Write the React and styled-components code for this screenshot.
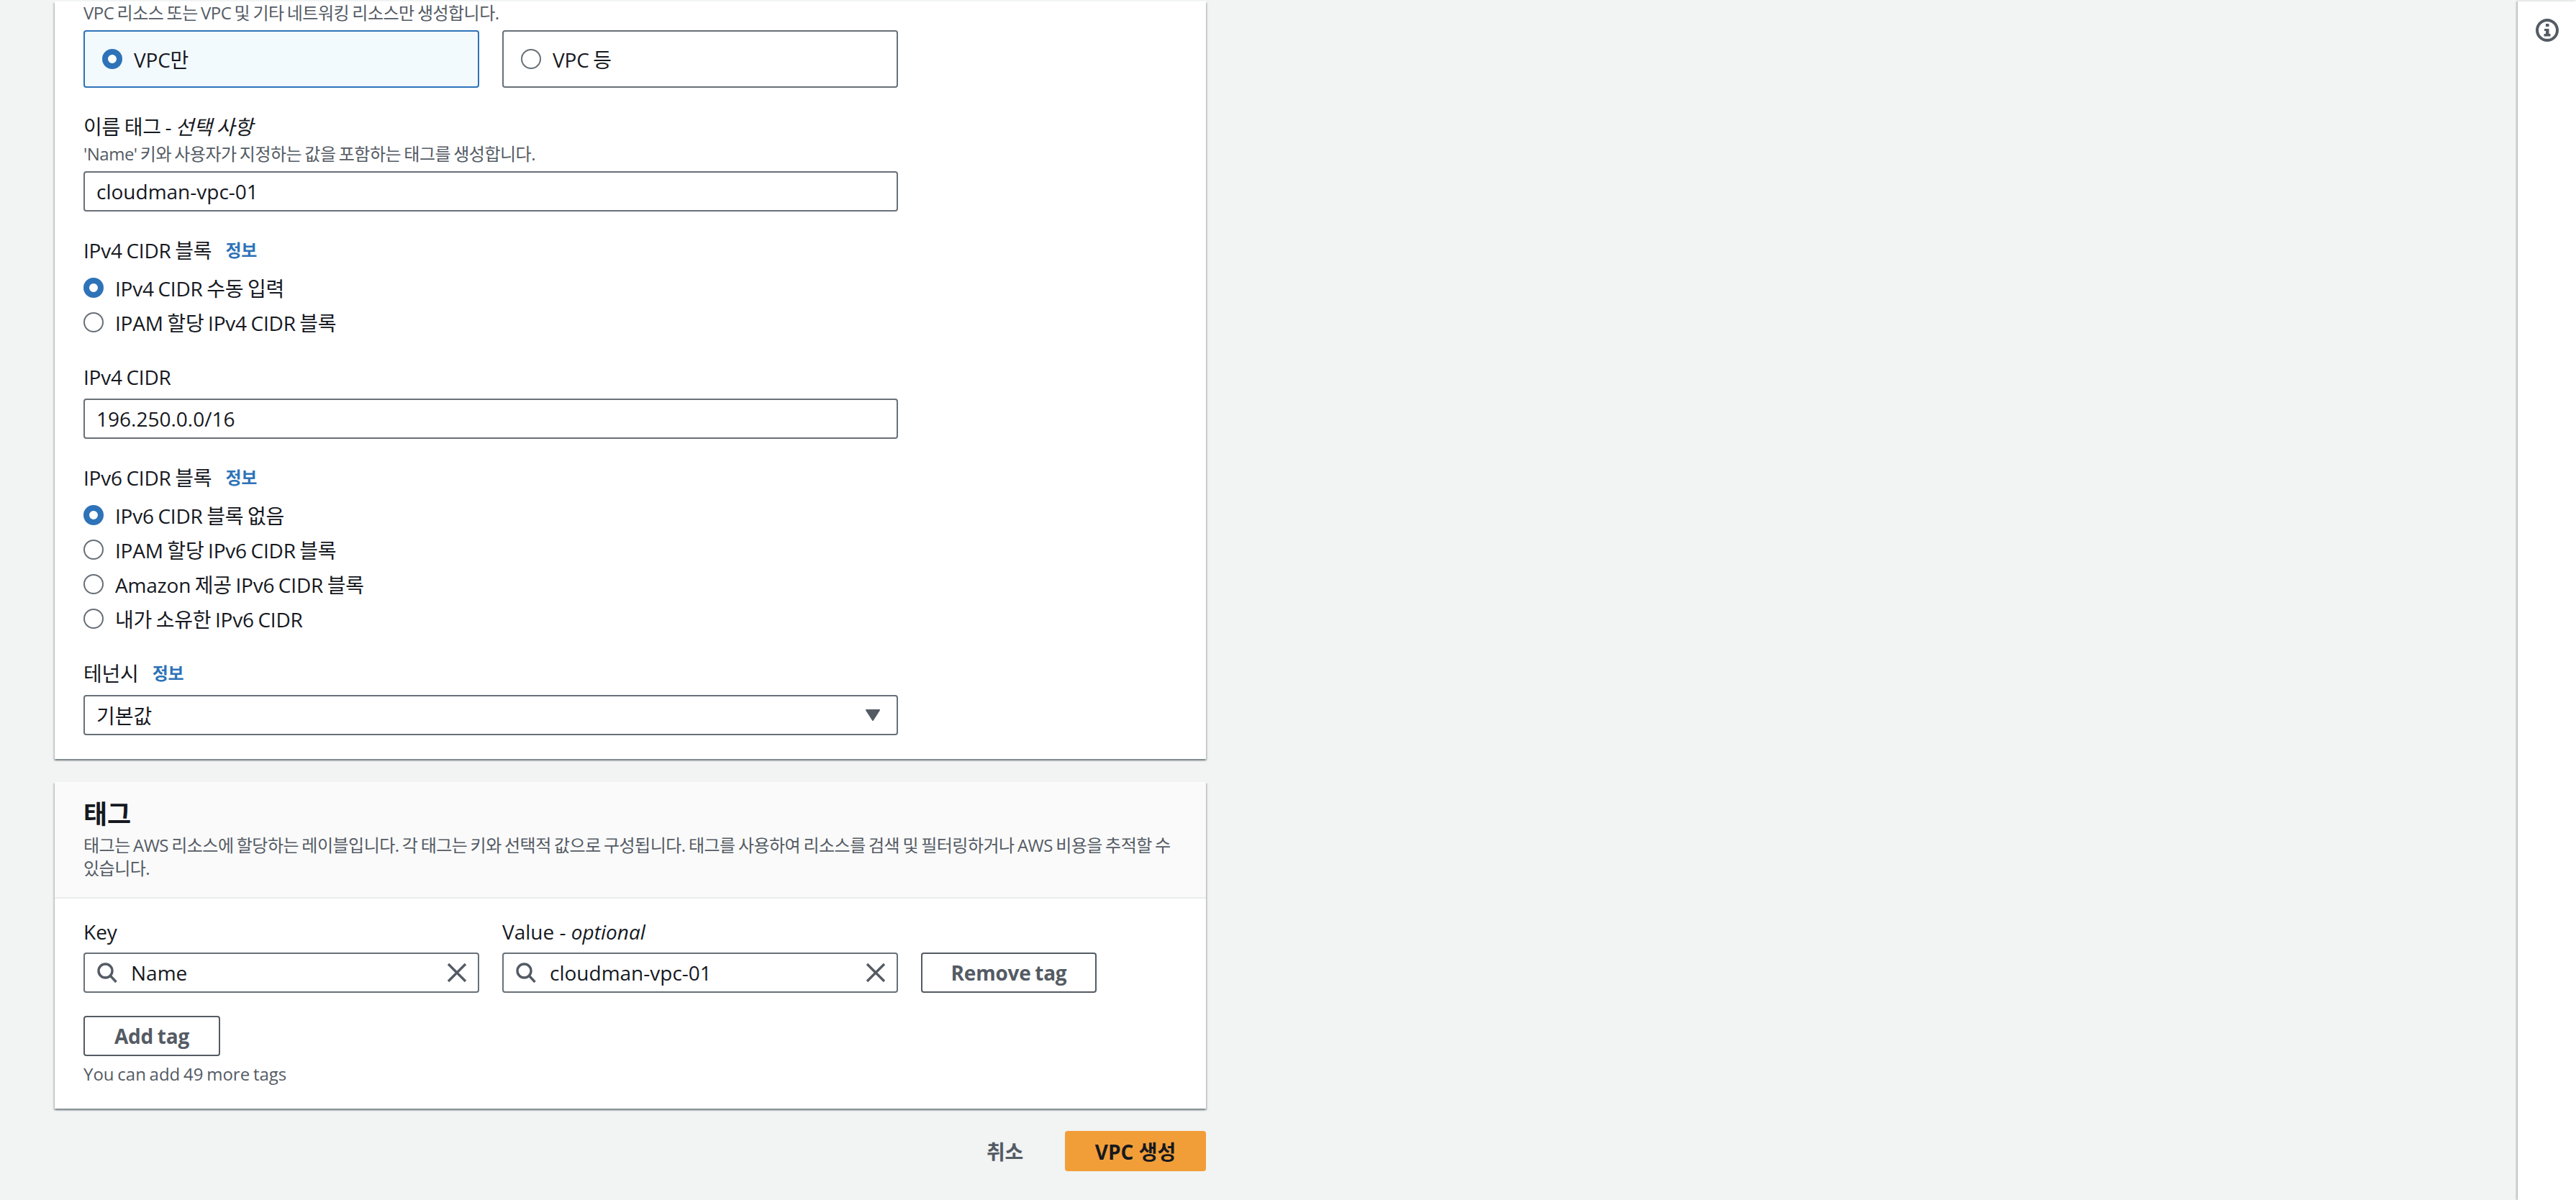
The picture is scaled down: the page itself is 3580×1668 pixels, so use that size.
import React from "react";
import styled, { createGlobalStyle } from "styled-components";

const GlobalStyle = createGlobalStyle`
  html, body {
    margin: 0;
    padding: 0;
    background: #f2f3f3;
  }
  body {
    font-family: "Open Sans", "Noto Sans CJK KR", sans-serif;
    font-size: 28px;
    word-spacing: -1.5px;
    letter-spacing: -0.2px;
    color: #16191f;
  }
`;

const Page = styled.div`
  display: flex;
  height: 1668px;
  padding-top: 2px;
  box-sizing: border-box;
  overflow: hidden;
  background: #f2f3f3;
`;

const Main = styled.main`
  flex: 1;
  padding-left: 76px;
`;

const Content = styled.div`
  width: 1600px;
`;

const SidePanel = styled.aside`
  width: 81px;
  background: #fff;
  box-shadow: -2px 0 2px rgba(0, 28, 36, 0.25);
  display: flex;
  justify-content: center;
  padding-top: 22px;
  box-sizing: border-box;
`;

const Card = styled.section`
  background: #fff;
  box-shadow: 0 2px 2px rgba(0, 28, 36, 0.4), 2px 2px 2px rgba(0, 28, 36, 0.12), -2px 2px 2px rgba(0, 28, 36, 0.12);
  margin-top: ${(p) => p.$top || 0}px;
  padding: ${(p) => (p.$flush ? "0" : "0 40px 33px")};
`;

const CardHeader = styled.header`
  height: 137px;
  padding: 23px 40px 0;
  background: #fafafa;
  border-bottom: 2px solid #eaeded;
`;

const CardBody = styled.div`
  padding: 26px 40px 32px;
`;

const Heading = styled.h2`
  margin: 0;
  font-size: 36px;
  line-height: 44px;
  font-weight: 700;
`;

const Hint = styled.div`
  font-size: 24px;
  line-height: 32px;
  letter-spacing: -0.5px;
  color: #545b64;
  margin-top: ${(p) => p.$top || 0}px;
`;

const HeaderHint = styled(Hint)`
  margin-top: 5px;
`;

const TagHint = styled(Hint)`
  letter-spacing: 0;
`;

const TileRow = styled.div`
  display: grid;
  grid-template-columns: 550px 550px;
  gap: 32px;
  margin-top: 8px;
`;

const Tile = styled.div`
  height: 80px;
  box-sizing: border-box;
  border-radius: 4px;
  border: 2px solid ${(p) => (p.$on ? "#2e73b8" : "#687078")};
  background: ${(p) => (p.$on ? "#f3fafe" : "#fff")};
  display: flex;
  align-items: center;
  gap: 16px;
  padding-left: 24px;
`;

const Field = styled.div`
  width: 1132px;
  margin-top: ${(p) => p.$top || 0}px;
`;

const Label = styled.div`
  display: flex;
  align-items: center;
  height: 40px;
  line-height: 40px;
  em {
    font-style: italic;
    white-space: pre;
  }
`;

const TagLabel = styled(Label)`
  letter-spacing: 0;
  word-spacing: 0;
`;

const InfoLink = styled.a`
  font-size: 24px;
  font-weight: 700;
  color: #2e73b8;
  margin-left: 19px;
`;

const TextBox = styled.div`
  height: 56px;
  box-sizing: border-box;
  border: 2px solid #687078;
  border-radius: 4px;
  background: #fff;
  display: flex;
  align-items: center;
  padding: 0 16px;
  margin-top: ${(p) => p.$top}px;
  justify-content: space-between;
  letter-spacing: 0;
`;

const RadioGroup = styled.div`
  margin-top: 8px;
`;

const RadioRow = styled.label`
  display: flex;
  align-items: center;
  height: 48px;
  gap: 16px;
`;

const Radio = styled.span`
  width: 28px;
  height: 28px;
  box-sizing: border-box;
  border-radius: 50%;
  background: #fff;
  border: ${(p) => (p.$on ? "8px solid #2e73b8" : "2px solid #687078")};
  flex: none;
`;

const Caret = styled.svg`
  width: 22px;
  height: 18px;
  margin-right: 6px;
`;

const TagRow = styled.div`
  display: flex;
  align-items: flex-end;
  gap: 32px;
`;

const TagField = styled.div`
  width: 550px;
`;

const SearchBox = styled.div`
  height: 56px;
  box-sizing: border-box;
  border: 2px solid #687078;
  border-radius: 4px;
  display: flex;
  align-items: center;
  padding: 0 14px 0 16px;
  margin-top: 9px;
  gap: 18px;
  letter-spacing: 0;
`;

const SearchValue = styled.span`
  flex: 1;
`;

const Button = styled.button`
  height: 56px;
  box-sizing: border-box;
  width: ${(p) => p.$w}px;
  padding: 0;
  border: 2px solid #545b64;
  border-radius: 4px;
  background: #fff;
  color: #545b64;
  font: 700 28px "Open Sans", "Noto Sans CJK KR", sans-serif;
  word-spacing: -1.5px;
  letter-spacing: -0.2px;
  margin-top: ${(p) => p.$top || 0}px;
  display: block;
`;

const Footer = styled.div`
  display: flex;
  justify-content: flex-end;
  align-items: center;
  margin-top: 31px;
  gap: 58px;
`;

const Cancel = styled.span`
  font-weight: 700;
  color: #545b64;
`;

const Primary = styled.button`
  height: 56px;
  width: 196px;
  border: 0;
  padding: 0;
  border-radius: 4px;
  background: #f19e38;
  color: #16191f;
  font: 700 28px "Open Sans", "Noto Sans CJK KR", sans-serif;
`;

const IconSearch = () => (
  <svg width="30" height="30" viewBox="0 0 30 30" fill="none" stroke="#545b64" strokeWidth="3.4">
    <circle cx="12.5" cy="12.5" r="9.5" />
    <path d="M19.5 19.5 L27.5 28" />
  </svg>
);

const IconClose = () => (
  <svg width="30" height="30" viewBox="0 0 30 30" fill="none" stroke="#545b64" strokeWidth="3.4">
    <path d="M3 3 L27 27 M27 3 L3 27" />
  </svg>
);

const IconInfo = () => (
  <svg width="36" height="36" viewBox="0 0 36 36" fill="none">
    <circle cx="18" cy="18" r="14" stroke="#545b64" strokeWidth="4" />
    <rect x="16" y="9" width="4.5" height="4" fill="#545b64" />
    <path d="M14 16 H20.5 V23 H22.5 V26.5 H13.5 V23 H16 V19 H14 Z" fill="#545b64" />
  </svg>
);

export default function App() {
  return (
    <>
      <GlobalStyle />
      <Page>
        <Main>
          <Content>
            <Card>
              <Hint>VPC 리소스 또는 VPC 및 기타 네트워킹 리소스만 생성합니다.</Hint>
              <TileRow>
                <Tile $on>
                  <Radio $on />
                  VPC만
                </Tile>
                <Tile>
                  <Radio />
                  VPC 등
                </Tile>
              </TileRow>

              <Field $top={34}>
                <Label>
                  이름 태그 -&nbsp;<em>선택 사항</em>
                </Label>
                <Hint $top={2}>'Name' 키와 사용자가 지정하는 값을 포함하는 태그를 생성합니다.</Hint>
                <TextBox $top={8}>cloudman-vpc-01</TextBox>
              </Field>

              <Field $top={34}>
                <Label>
                  IPv4 CIDR 블록<InfoLink>정보</InfoLink>
                </Label>
                <RadioGroup>
                  <RadioRow>
                    <Radio $on />
                    IPv4 CIDR 수동 입력
                  </RadioRow>
                  <RadioRow>
                    <Radio />
                    IPAM 할당 IPv4 CIDR 블록
                  </RadioRow>
                </RadioGroup>
              </Field>

              <Field $top={32}>
                <Label>IPv4 CIDR</Label>
                <TextBox $top={10}>196.250.0.0/16</TextBox>
              </Field>

              <Field $top={34}>
                <Label>
                  IPv6 CIDR 블록<InfoLink>정보</InfoLink>
                </Label>
                <RadioGroup>
                  <RadioRow>
                    <Radio $on />
                    IPv6 CIDR 블록 없음
                  </RadioRow>
                  <RadioRow>
                    <Radio />
                    IPAM 할당 IPv6 CIDR 블록
                  </RadioRow>
                  <RadioRow>
                    <Radio />
                    Amazon 제공 IPv6 CIDR 블록
                  </RadioRow>
                  <RadioRow>
                    <Radio />
                    내가 소유한 IPv6 CIDR
                  </RadioRow>
                </RadioGroup>
              </Field>

              <Field $top={32}>
                <Label>
                  테넌시<InfoLink>정보</InfoLink>
                </Label>
                <TextBox $top={10}>
                  기본값
                  <Caret viewBox="0 0 22 18">
                    <path d="M2 2 H20 L11 16 Z" fill="#545b64" stroke="#545b64" strokeWidth="2" strokeLinejoin="round" />
                  </Caret>
                </TextBox>
              </Field>
            </Card>

            <Card $flush $top={32}>
              <CardHeader>
                <Heading>태그</Heading>
                <HeaderHint>
                  태그는 AWS 리소스에 할당하는 레이블입니다. 각 태그는 키와 선택적 값으로 구성됩니다. 태그를 사용하여 리소스를 검색 및 필터링하거나 AWS 비용을 추적할 수 있습니다.
                </HeaderHint>
              </CardHeader>
              <CardBody>
                <TagRow>
                  <TagField>
                    <TagLabel>Key</TagLabel>
                    <SearchBox>
                      <IconSearch />
                      <SearchValue>Name</SearchValue>
                      <IconClose />
                    </SearchBox>
                  </TagField>
                  <TagField>
                    <TagLabel>
                      Value -&nbsp;<em>optional</em>
                    </TagLabel>
                    <SearchBox>
                      <IconSearch />
                      <SearchValue>cloudman-vpc-01</SearchValue>
                      <IconClose />
                    </SearchBox>
                  </TagField>
                  <Button $w={244}>Remove tag</Button>
                </TagRow>
                <Button $w={190} $top={32}>
                  Add tag
                </Button>
                <TagHint $top={9}>You can add 49 more tags</TagHint>
              </CardBody>
            </Card>

            <Footer>
              <Cancel>취소</Cancel>
              <Primary>VPC 생성</Primary>
            </Footer>
          </Content>
        </Main>
        <SidePanel>
          <IconInfo />
        </SidePanel>
      </Page>
    </>
  );
}
